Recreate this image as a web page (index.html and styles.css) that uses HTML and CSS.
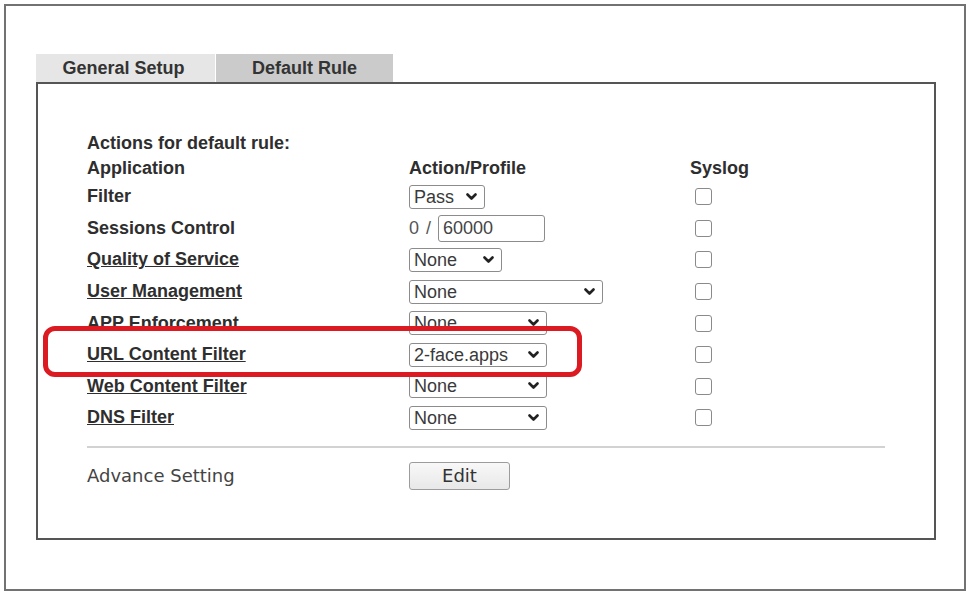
FILE: index.html
```html
<!DOCTYPE html>
<html lang="en">
<head>
    <meta charset="UTF-8">
    <title>Default Rule</title>
    <link rel="stylesheet" href="styles.css">
</head>
<body>
    <div class="page">
        <div class="tabs">
            <div class="tab">General Setup</div>
            <div class="tab active">Default Rule</div>
        </div>

        <div class="panel">
            <div class="caption">Actions for default rule:</div>
            <div class="rules">
                <div class="head">Application</div>
                <div class="head">Action/Profile</div>
                <div class="head syslog-head">Syslog</div>

                <div class="name">Filter</div>
                <div>
                    <span class="pick"><select class="w-pass"><option>Pass</option><option>Block</option></select><svg width="11" height="8" viewBox="0 0 11 8"><polyline points="1.5,1.5 5.5,5.5 9.5,1.5"/></svg></span>
                </div>
                <div><input type="checkbox" class="log"></div>

                <div class="name">Sessions Control</div>
                <div class="sessions">
                    <span class="used">0 /</span>
                    <input type="text" class="limit" value="60000">
                </div>
                <div><input type="checkbox" class="log"></div>

                <div class="name"><a href="#">Quality of Service</a></div>
                <div>
                    <span class="pick"><select class="w-qos"><option>None</option></select><svg width="11" height="8" viewBox="0 0 11 8"><polyline points="1.5,1.5 5.5,5.5 9.5,1.5"/></svg></span>
                </div>
                <div><input type="checkbox" class="log"></div>

                <div class="name"><a href="#">User Management</a></div>
                <div>
                    <span class="pick"><select class="w-user"><option>None</option></select><svg width="11" height="8" viewBox="0 0 11 8"><polyline points="1.5,1.5 5.5,5.5 9.5,1.5"/></svg></span>
                </div>
                <div><input type="checkbox" class="log"></div>

                <div class="name"><a href="#">APP Enforcement</a></div>
                <div>
                    <span class="pick"><select class="w-std"><option>None</option></select><svg width="11" height="8" viewBox="0 0 11 8"><polyline points="1.5,1.5 5.5,5.5 9.5,1.5"/></svg></span>
                </div>
                <div><input type="checkbox" class="log"></div>

                <div class="name"><a href="#">URL Content Filter</a></div>
                <div>
                    <span class="pick"><select class="w-std"><option>2-face.apps</option><option>None</option></select><svg width="11" height="8" viewBox="0 0 11 8"><polyline points="1.5,1.5 5.5,5.5 9.5,1.5"/></svg></span>
                </div>
                <div><input type="checkbox" class="log"></div>

                <div class="name"><a href="#">Web Content Filter</a></div>
                <div>
                    <span class="pick"><select class="w-std"><option>None</option></select><svg width="11" height="8" viewBox="0 0 11 8"><polyline points="1.5,1.5 5.5,5.5 9.5,1.5"/></svg></span>
                </div>
                <div><input type="checkbox" class="log"></div>

                <div class="name"><a href="#">DNS Filter</a></div>
                <div>
                    <span class="pick"><select class="w-std"><option>None</option></select><svg width="11" height="8" viewBox="0 0 11 8"><polyline points="1.5,1.5 5.5,5.5 9.5,1.5"/></svg></span>
                </div>
                <div><input type="checkbox" class="log"></div>
            </div>

            <div class="separator"></div>

            <div class="advance">
                <div class="advance-label">Advance Setting</div>
                <div><button type="button" class="edit">Edit</button></div>
            </div>

            <!-- highlight drawn over the URL Content Filter row -->
            <div class="highlight"></div>
        </div>
    </div>
</body>
</html>
```

FILE: styles.css
```css
body {
    margin: 0;
    padding: 0;
    background: #ffffff;
    font-family: "Liberation Sans", Arial, sans-serif;
    color: #2e2e2e;
}
.page {
    box-sizing: border-box;
    width: 962px;
    height: 587px;
    margin: 4px 0 0 4px;
    padding: 48px 28px 0 30px;
    border: 2px solid #727272;
}
.tabs {
    display: flex;
    gap: 1px;
    height: 28px;
}
.tab {
    width: 179px;
    background: #e6e6e6;
    font-size: 18px;
    font-weight: bold;
    line-height: 28px;
    text-align: center;
    color: #333;
    text-indent: -4px;
}
.tab.active {
    width: 177px;
    background: #cbcbcb;
    text-indent: 0;
}
.panel {
    position: relative;
    box-sizing: border-box;
    height: 458px;
    padding: 47px 49px 0 49px;
    border: 2px solid #555;
}
.caption {
    font-size: 18px;
    font-weight: bold;
    line-height: 24px;
}
.rules {
    display: grid;
    grid-template-columns: 322px 281px 1fr;
    grid-template-rows: 26px;
    grid-auto-rows: 31.6px;
    align-items: center;
}
.head,
.name {
    font-size: 18px;
    font-weight: bold;
    white-space: nowrap;
}
.name a {
    color: #2e2e2e;
    text-decoration: underline;
}
.pick {
    position: relative;
    display: inline-block;
    vertical-align: middle;
}
.pick select {
    -webkit-appearance: none;
    appearance: none;
    box-sizing: border-box;
    height: 24px;
    padding: 0 4px;
    border: 1px solid #8c8c8c;
    border-radius: 3px;
    background: #fff;
    font-family: "Liberation Sans", Arial, sans-serif;
    font-size: 18px;
    color: #3a3a3a;
    display: block;
}
.pick svg {
    position: absolute;
    right: 8px;
    top: 50%;
    margin-top: -4px;
    pointer-events: none;
}
.pick polyline {
    fill: none;
    stroke: #222;
    stroke-width: 2.6;
    stroke-linecap: round;
    stroke-linejoin: round;
}
.w-pass {
    width: 76px;
}
.w-qos {
    width: 93px;
}
.w-user {
    width: 194px;
}
.w-std {
    width: 138px;
}
.sessions {
    display: flex;
    align-items: center;
}
.used {
    font-size: 18px;
    color: #555;
    margin-right: 6px;
    letter-spacing: 1px;
}
.limit {
    box-sizing: border-box;
    width: 107px;
    height: 27px;
    padding: 0 4px;
    border: 1px solid #8c8c8c;
    border-radius: 3px;
    font-family: "Liberation Sans", Arial, sans-serif;
    font-size: 18px;
    color: #444;
    outline: none;
}
.log {
    -webkit-appearance: none;
    appearance: none;
    display: block;
    width: 17px;
    height: 17px;
    margin: 0 0 0 5px;
    border: 1.5px solid #8a8a8a;
    border-radius: 3px;
    background: #fff;
}
.separator {
    height: 2px;
    margin-top: 12px;
    background: #d2d2d2;
}
.advance {
    display: grid;
    grid-template-columns: 322px 1fr;
    align-items: center;
    height: 32px;
    margin-top: 12px;
}
.advance-label {
    font-family: "DejaVu Sans", sans-serif;
    font-size: 18px;
    color: #444;
}
.edit {
    display: block;
    width: 101px;
    height: 28px;
    padding: 0;
    border: 1px solid #9c9c9c;
    border-radius: 3px;
    background: linear-gradient(to bottom, #f8f8f8, #e8e8e8);
    font-family: "DejaVu Sans", sans-serif;
    font-size: 18px;
    color: #333;
}
.highlight {
    position: absolute;
    left: 5px;
    top: 242px;
    width: 539px;
    height: 51px;
    box-sizing: border-box;
    border: 5px solid #dc1a21;
    border-radius: 12px;
    pointer-events: none;
}
```
